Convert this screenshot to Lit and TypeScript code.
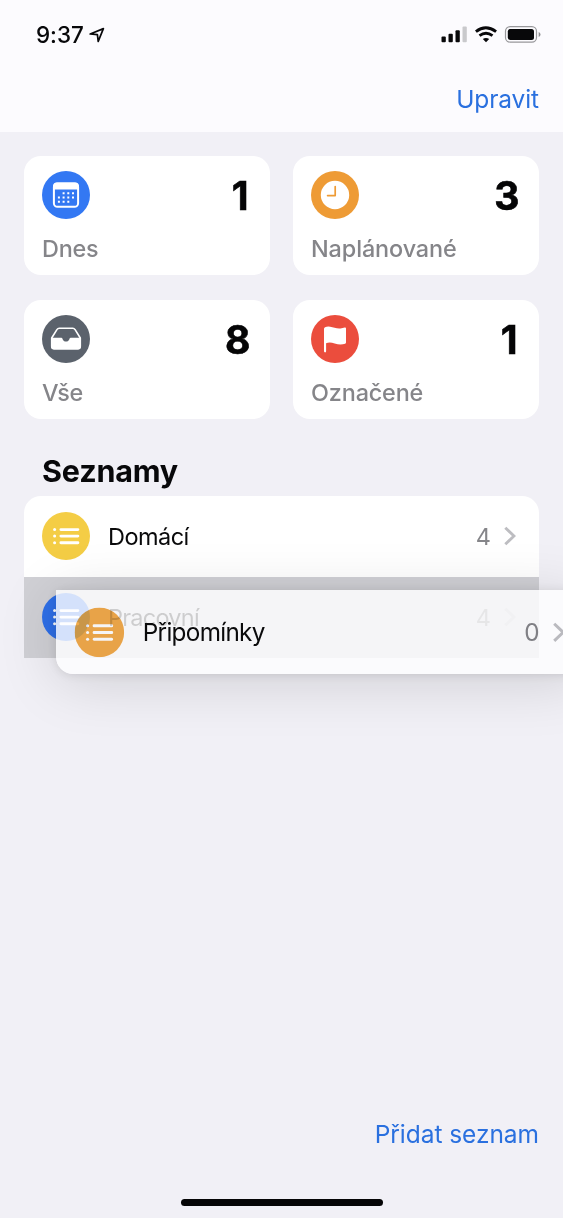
import { LitElement, html, css, svg } from "lit";
import { customElement, property } from "lit/decorators.js";
import { classMap } from "lit/directives/class-map.js";
import { styleMap } from "lit/directives/style-map.js";

const glyphs: Record<string, unknown> = {
  calendar: svg`
    <rect x="11.9" y="12.4" width="24.2" height="23.4" rx="3.6" fill="none" stroke="#fff" stroke-width="2"/>
    <path d="M11 18.5v-3.3q0-3.8 3.8-3.8h18.4q3.8 0 3.8 3.8v3.3z" fill="#fff"/>
    <path d="M20.6 21.2h2v2h-2zM25.3 21.2h2v2h-2zM30 21.2h2v2h-2zM15.9 25.5h2v2h-2zM20.6 25.5h2v2h-2zM25.3 25.5h2v2h-2zM30 25.5h2v2h-2zM15.9 29.7h2v2h-2zM20.6 29.7h2v2h-2zM25.3 29.7h2v2h-2z" fill="#fff"/>`,
  clock: svg`
    <circle cx="24" cy="24" r="14.2" fill="#fff"/>
    <path d="M24.2 15.5v9.1h-7.6" fill="none" stroke="#ee9b35" stroke-width="1.7" stroke-linecap="round" stroke-linejoin="round"/>`,
  tray: svg`
    <path d="M9.7 23 14.9 14.6q.9-1.3 2.3-1.3h13.6q1.4 0 2.3 1.3L38.3 23v8.2q0 2.4-2.4 2.4H12.1q-2.4 0-2.4-2.4z" fill="none" stroke="#fff" stroke-width="1.6" stroke-linejoin="round"/>
    <path d="M9.2 22.7h10q1 0 1.3 1.1.7 2.8 3.5 2.8t3.5-2.8q.3-1.1 1.3-1.1h10v8.8q0 2.9-2.9 2.9H12.1q-2.9 0-2.9-2.9z" fill="#fff"/>`,
  flag: svg`
    <path d="M13 13.7q0-1 1-1.5 2.3-.9 5.1-.5 2.2.3 4.5 1.1 3.2.9 5.9.6 2.3-.3 4.2-.9 1.3-.3 1.3 1v14q0 .9-.9 1.2-2 .8-4.7.8-2.5 0-5.7-1-2.8-.9-5-.9-2 0-3.6.6V36.3q0 1.1-1 1.1t-1.1-1.1z" fill="#fff"/>`,
  list: svg`
    <path d="M18.9 17.6h17M18.9 24.1h17M18.9 30.7h17" stroke="#fff" stroke-width="2.9" stroke-linecap="round"/>
    <circle cx="12.6" cy="17.6" r="1.5" fill="#fff"/><circle cx="12.6" cy="24.1" r="1.5" fill="#fff"/><circle cx="12.6" cy="30.7" r="1.5" fill="#fff"/>`,
};

@customElement("round-icon")
class RoundIcon extends LitElement {
  static styles = css`
    :host { display: block; width: 48px; height: 48px; flex: none; }
    .disc { display: block; width: 100%; height: 100%; }
  `;
  @property() name = "list";
  @property() color = "#000";
  render() {
    return html`<svg class="disc" viewBox="0 0 48 48">
      <circle cx="24" cy="24" r="24" fill=${this.color}></circle>${glyphs[this.name]}
    </svg>`;
  }
}

@customElement("summary-card")
class SummaryCard extends LitElement {
  static styles = css`
    :host { display: block; }
    .card { box-sizing: border-box; height: 119px; padding: 15px 18px 0; border-radius: 17px; background: #fff; }
    .top { display: flex; justify-content: space-between; align-items: flex-start; }
    .count { margin-right: 1.5px; font: 700 39px/49px Inter, sans-serif; color: #050506; -webkit-text-stroke: .6px #050506; }
    .single { margin-right: 3.5px; }
    .label { margin-top: 13px; font: 500 23.4px/32px Inter, sans-serif; color: #858589; white-space: nowrap; }
  `;
  @property() icon = "";
  @property() color = "";
  @property() label = "";
  @property() spacing = "0";
  @property({ type: Number }) count = 0;
  render() {
    return html`<div class="card">
      <div class="top">
        <round-icon name=${this.icon} color=${this.color}></round-icon>
        <span class=${classMap({ count: true, single: this.count === 1 })}>${this.count}</span>
      </div>
      <div class="label" style=${styleMap({ letterSpacing: this.spacing })}>${this.label}</div>
    </div>`;
  }
}

@customElement("list-row")
class ListRow extends LitElement {
  static styles = css`
    :host { display: block; }
    .row { display: flex; align-items: center; height: 81px; padding: 0 23px 0 18px; font: 400 23.5px/32px Inter, sans-serif; color: #0a0a0b; }
    .name { flex: 1; margin-left: 18px; padding-top: 1px; white-space: nowrap; }
    .count { color: #858589; margin-right: 13px; padding-top: 1px; }
    .chevron { display: block; width: 12px; height: 20px; }
  `;
  @property() name = "";
  @property() color = "";
  @property() spacing = "0";
  @property({ type: Number }) count = 0;
  render() {
    return html`<div class="row">
      <round-icon name="list" color=${this.color}></round-icon>
      <span class="name" style=${styleMap({ letterSpacing: this.spacing })}>${this.name}</span>
      <span class="count">${this.count}</span>
      <svg class="chevron" viewBox="0 0 12 20"><path d="M1.3 1.7 10 10l-8.7 8.3" fill="none" stroke="#bdbdc1" stroke-width="2.9"/></svg>
    </div>`;
  }
}

@customElement("app-root")
class AppRoot extends LitElement {
  static styles = css`
    :host { display: block; }
    .screen { position: relative; display: flex; flex-direction: column; box-sizing: border-box; width: 563px; height: 1218px; overflow: hidden; background: #f1f0f6; font-family: Inter, sans-serif; }
    .header { height: 132px; background: #fcfbfe; flex: none; }
    .status { display: flex; align-items: center; height: 69px; padding: 0 22px 0 36px; }
    .time { font-size: 22.5px; font-weight: 500; letter-spacing: -.05px; color: #08080a; }
    .arrow { width: 16px; height: 16px; margin-left: 5px; }
    .indicators { margin-left: auto; width: 100px; height: 20px; }
    .link { font-size: 24.5px; line-height: 32px; color: #2a70df; white-space: nowrap; }
    .nav { display: flex; justify-content: flex-end; padding: 14px 24px 0; }
    .edit { letter-spacing: -.1px; }
    .cards { display: grid; grid-template-columns: 246px 246px; gap: 24.5px 23px; padding: 24px 24px 0; }
    .title { margin: 33px 42px 0; font-size: 30.5px; line-height: 38px; font-weight: 700; letter-spacing: -.2px; color: #08080a; }
    .lists { margin: 6px 24px 0; }
    .first { background: #fff; border-radius: 17px 17px 0 0; height: 81px; }
    .target { background: #d0d0d5; height: 81.5px; }
    .dragged { position: absolute; left: 56px; top: 590px; box-sizing: border-box; width: 531px; height: 84px; border-radius: 0 17px 17px 17px; background: rgba(254,254,255,.8); box-shadow: 0 8px 60px rgba(0,0,0,.14), 0 1px 10px rgba(0,0,0,.1); }
    .lifted { width: 516px; transform: scale(1.033); transform-origin: 0 0; mix-blend-mode: multiply; }
    .footer { display: flex; flex-direction: column; margin-top: auto; height: 100px; }
    .add { align-self: flex-end; margin-right: 24px; letter-spacing: -.05px; }
    .home { width: 202px; height: 7px; border-radius: 4px; background: #050506; margin: 48.5px auto 0; align-self: center; }
  `;
  render() {
    return html`<div class="screen">
      <div class="header">
        <div class="status">
          <span class="time">9:37</span>
          <svg class="arrow" viewBox="0 0 16 16"><path d="M1.2 7 14.4 1.6 9.2 14.4 8.4 7.7z" fill="none" stroke="#08080a" stroke-width="1.7" stroke-linejoin="round"/></svg>
          <svg class="indicators" viewBox="0 0 100 20">
            <rect x=".5" y="11.5" width="4.3" height="5.8" rx="1" fill="#08080a"/>
            <rect x="7.5" y="8.8" width="4.3" height="8.5" rx="1" fill="#08080a"/>
            <rect x="14.5" y="5.2" width="4.3" height="12.1" rx="1" fill="#08080a"/>
            <rect x="21.5" y="1.6" width="4.3" height="15.7" rx="1" fill="#c9c9cc"/>
            <path d="M34.9 6.6q9.8-7.7 20.2 0" fill="none" stroke="#08080a" stroke-width="2.9"/>
            <path d="M38.5 10.7q6.5-5 13 0" fill="none" stroke="#08080a" stroke-width="2.8"/>
            <path d="M41.8 14.1q3.2-2.4 6.4 0L45 17.3z" fill="#08080a"/>
            <rect x="64.5" y="1.6" width="31" height="15.6" rx="4.6" fill="none" stroke="#98989b" stroke-width="1.2"/>
            <rect x="66.8" y="3.9" width="26.2" height="11" rx="2.5" fill="#08080a"/>
            <path d="M97.7 7v5q1.8-.8 1.8-2.5T97.7 7z" fill="#8e8e91"/>
          </svg>
        </div>
        <div class="nav"><span class="link edit">Upravit</span></div>
      </div>
      <div class="cards">
        <summary-card icon="calendar" color="#3378f3" label="Dnes" count="1" spacing="-.2px"></summary-card>
        <summary-card icon="clock" color="#ee9b35" label="Naplánované" count="3" spacing="-.1px"></summary-card>
        <summary-card icon="tray" color="#5b626c" label="Vše" count="8" spacing="-.3px"></summary-card>
        <summary-card icon="flag" color="#eb4d3d" label="Označené" count="1" spacing="-.15px"></summary-card>
      </div>
      <div class="title">Seznamy</div>
      <div class="lists">
        <list-row class="first" name="Domácí" color="#f4cd45" count="4" spacing="-.55px"></list-row>
        <list-row class="target" name="Pracovní" color="#2e6fe8" count="4" spacing="-.75px"></list-row>
      </div>
      <div class="footer">
        <span class="link add">Přidat seznam</span>
        <div class="home"></div>
      </div>
      <div class="dragged">
        <list-row class="lifted" name="Připomínky" color="#f2aa4a" count="0" spacing="-.67px"></list-row>
      </div>
    </div>`;
  }
}
